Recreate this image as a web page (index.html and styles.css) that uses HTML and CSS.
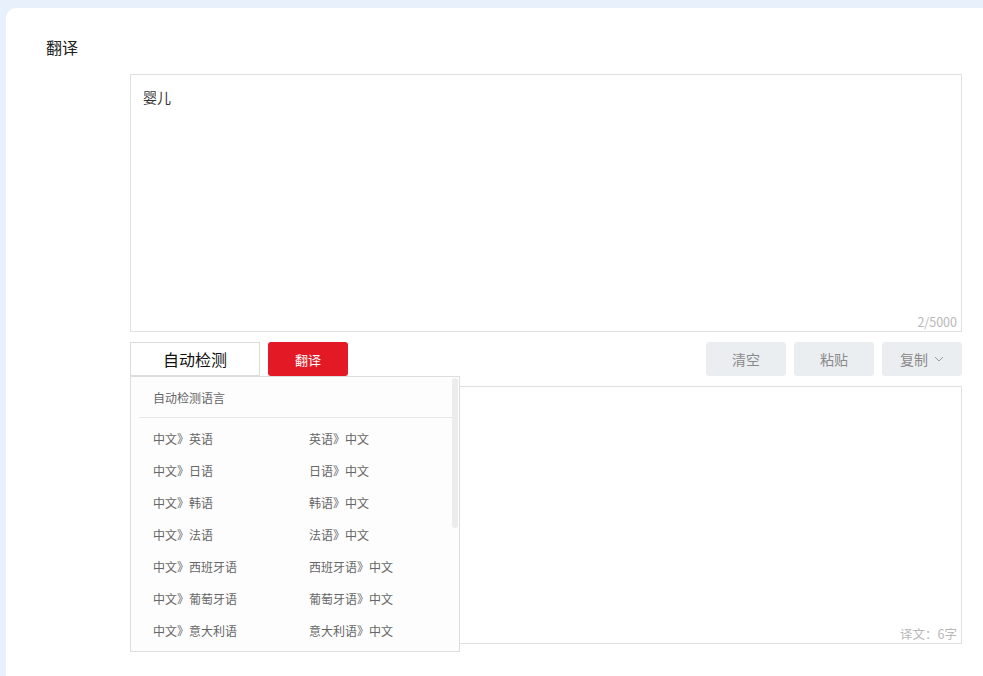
FILE: index.html
```html
<!DOCTYPE html>
<html lang="zh-CN">
<head>
<meta charset="utf-8">
<title>翻译</title>
<link rel="stylesheet" href="styles.css">
</head>
<body>
<div class="page">
  <div class="card">
    <div class="title">翻译</div>
    <div class="main">
      <div class="box input-box">
        <div class="box-text">婴儿</div>
        <span class="counter">2/5000</span>
      </div>
      <div class="toolbar">
        <div class="left-tools">
          <div class="select">自动检测</div>
          <button class="btn-red">翻译</button>
        </div>
        <div class="right-tools">
          <button class="btn-grey">清空</button>
          <button class="btn-grey">粘贴</button>
          <button class="btn-grey">复制 <svg class="chev" width="10" height="6" viewBox="0 0 10 6"><path d="M1 1l4 4 4-4" fill="none" stroke="#999" stroke-width="1"/></svg></button>
        </div>
        <div class="dropdown">
          <div class="dd-head">自动检测语言</div>
          <div class="dd-list">
            <div class="dd-row"><span>中文》英语</span><span>英语》中文</span></div>
            <div class="dd-row"><span>中文》日语</span><span>日语》中文</span></div>
            <div class="dd-row"><span>中文》韩语</span><span>韩语》中文</span></div>
            <div class="dd-row"><span>中文》法语</span><span>法语》中文</span></div>
            <div class="dd-row"><span>中文》西班牙语</span><span>西班牙语》中文</span></div>
            <div class="dd-row"><span>中文》葡萄牙语</span><span>葡萄牙语》中文</span></div>
            <div class="dd-row"><span>中文》意大利语</span><span>意大利语》中文</span></div>
          </div>
          <div class="dd-thumb"></div>
        </div>
      </div>
      <div class="box output-box">
        <span class="counter">译文：6字</span>
      </div>
    </div>
  </div>
</div>
</body>
</html>
```
FILE: styles.css
```css
html, body {
  margin: 0;
  padding: 0;
  height: 100%;
  overflow: hidden;
}
body {
  background: #e8f0fc;
  font-family: "Noto Sans CJK SC", "Noto Sans", sans-serif;
  color: #333;
}
.page {
  padding: 8px 0 0 6px;
  height: 100%;
  box-sizing: border-box;
}
.card {
  background: #fff;
  border-radius: 10px 0 0 0;
  height: 100%;
  padding: 28px 0 0 40px;
  box-sizing: border-box;
}
.title {
  font-size: 16px;
  line-height: 22px;
  color: #222;
}
.main {
  margin: 16px 0 0 84px;
  width: 832px;
}
.box {
  position: relative;
  height: 258px;
  border: 1px solid #e0e0e0;
  box-sizing: border-box;
  background: #fff;
}
.box-text {
  padding: 12px 12px;
  font-size: 14px;
  line-height: 20px;
  color: #333;
}
.counter {
  position: absolute;
  right: 4px;
  bottom: 1px;
  font-size: 12.5px;
  line-height: 16px;
  color: #b8b8b8;
}
.toolbar {
  position: relative;
  margin-top: 10px;
  height: 34px;
  display: flex;
  justify-content: space-between;
}
.left-tools, .right-tools {
  display: flex;
  gap: 8px;
}
.select {
  width: 130px;
  height: 34px;
  box-sizing: border-box;
  border: 1px solid #dcdcdc;
  font-size: 16px;
  line-height: 32px;
  text-align: center;
  color: #111;
}
button {
  font-family: inherit;
  border: 0;
  padding: 0;
  cursor: pointer;
}
.btn-red {
  width: 80px;
  height: 34px;
  border-radius: 3px;
  background: #e31a25;
  color: #fff;
  font-size: 13px;
}
.btn-grey {
  width: 80px;
  height: 34px;
  border-radius: 3px;
  background: #ebeef1;
  color: #8a8a8a;
  font-size: 14px;
  display: flex;
  align-items: center;
  justify-content: center;
  gap: 6px;
}
.chev {
  display: block;
}
.output-box {
  margin-top: 10px;
}
.dropdown {
  position: absolute;
  top: 34px;
  left: 0;
  width: 330px;
  height: 276px;
  box-sizing: border-box;
  border: 1px solid #dddddd;
  background: #fdfdfd;
  z-index: 5;
  overflow: hidden;
}
.dd-head {
  margin: 0 8px;
  padding-left: 14px;
  height: 40px;
  line-height: 42px;
  font-size: 12px;
  color: #666;
  border-bottom: 1px solid #e8e8e8;
  width: 299px;
}
.dd-list {
  padding-top: 5px;
}
.dd-row {
  display: flex;
  height: 32px;
  line-height: 32px;
  padding-left: 22px;
  font-size: 12px;
  color: #666;
}
.dd-row span {
  flex: 0 0 156px;
  white-space: nowrap;
}
.dd-thumb {
  position: absolute;
  top: 1px;
  left: 321px;
  width: 6px;
  height: 150px;
  border-radius: 3px;
  background: #ececec;
}
```
